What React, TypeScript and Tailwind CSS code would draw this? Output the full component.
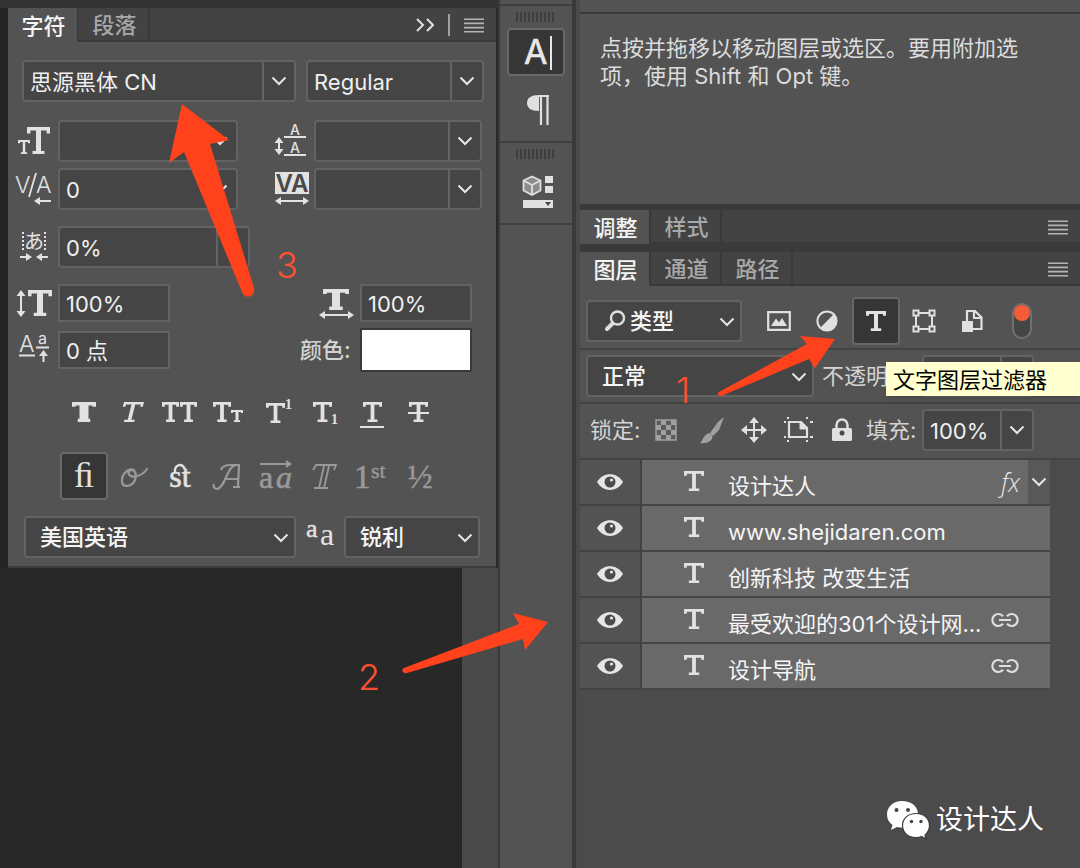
import { useState } from 'react';
import type { ReactNode } from 'react';

const Chevron = ({ className = '' }: { className?: string }) => (
    <svg viewBox="0 0 16 10" className={`w-4 h-[10px] shrink-0 ${className}`} fill="none" stroke="#e6e6e6" strokeWidth="2">
        <path d="M1.5 1.5 8 8l6.5-6.5" />
    </svg>
);

const MenuLines = () => (
    <svg viewBox="0 0 20 15" className="w-5 h-[15px]" stroke="#b4b4b4" strokeWidth="1.6">
        <path d="M0 1.2h20M0 5.4h20M0 9.6h20M0 13.8h20" />
    </svg>
);

// Slab "type" symbol, drawn with strokes so that it can have any weight
const SlabT = ({ x, y, w, h, s = 3, stem = s + 1 }: { x: number; y: number; w: number; h: number; s?: number; stem?: number }) => {
    const c = x + w / 2;
    const drop = Math.max(3, h * 0.24);
    return (
        <g fill="none" stroke="currentColor">
            <path strokeWidth={s} d={`M${x + s / 2} ${y + drop}V${y + s / 2}H${x + w - s / 2}V${y + drop}`} />
            <path strokeWidth={stem} d={`M${c} ${y}V${y + h}`} />
            <path strokeWidth={s * 0.9} d={`M${c - w * 0.26} ${y + h - s * 0.45}H${c + w * 0.26}`} />
        </g>
    );
};

const Glyph = ({ children, box = '0 0 36 34', className = 'w-9 h-[34px]' }: { children: ReactNode; box?: string; className?: string }) => (
    <svg viewBox={box} className={`shrink-0 overflow-visible text-[#e2e2e2] ${className}`} fill="currentColor">
        {children}
    </svg>
);

const ArrowH = ({ x1, x2, y, both = false }: { x1: number; x2: number; y: number; both?: boolean }) => {
    const d = x2 > x1 ? 1 : -1;
    return (
        <g>
            <path d={`M${both ? x1 + 4 : x1} ${y}H${x2 - d * 4}`} stroke="currentColor" strokeWidth="2" />
            <path d={`M${x2} ${y}l${-d * 6} -4v8z`} />
            {both && <path d={`M${x1} ${y}l${d * 6} -4v8z`} />}
        </g>
    );
};

const ArrowV = ({ x, y1, y2 }: { x: number; y1: number; y2: number }) => (
    <g>
        <path d={`M${x} ${y1 + 4}V${y2 - 4}`} stroke="currentColor" strokeWidth="2" />
        <path d={`M${x} ${y1}l-4.5 6h9zM${x} ${y2}l-4.5 -6h9z`} />
    </g>
);

const icons = {
    size: (
        <Glyph>
            <SlabT x={2} y={16} w={12} h={14} s={2} stem={2.5} />
            <SlabT x={11} y={3} w={23} h={27} s={3.4} stem={5} />
        </Glyph>
    ),
    kerning: (
        <Glyph>
            <text x="-1" y="21" className="text-[23px] font-light">V</text>
            <text x="20" y="21" className="text-[23px] font-light">A</text>
            <path d="M13 25 20 1" stroke="currentColor" strokeWidth="1.8" />
            <ArrowH x1={35} x2={18} y={29} />
        </Glyph>
    ),
    leading: (
        <Glyph>
            <text x="23" y="11" textAnchor="middle" className="text-[14px] font-medium">A</text>
            <text x="23" y="29" textAnchor="middle" className="text-[14px] font-medium">A</text>
            <path d="M12 13h22M12 31h22" stroke="currentColor" strokeWidth="2" />
            <ArrowV x={7} y1={13} y2={31} />
        </Glyph>
    ),
    tracking: (
        <Glyph>
            <path d="M3 0h34v22H3z" />
            <text x="20" y="20" textAnchor="middle" fill="#484848" className="text-[24px] font-semibold">VA</text>
            <ArrowH x1={3} x2={37} y={29} both />
        </Glyph>
    ),
    tsume: (
        <Glyph>
            <path d="M7 2v19M29 2v19" stroke="currentColor" strokeWidth="2" strokeDasharray="2 2" />
            <text x="18" y="19" textAnchor="middle" className="text-[20px]">あ</text>
            <ArrowH x1={4} x2={16} y={27} />
            <ArrowH x1={32} x2={20} y={27} />
        </Glyph>
    ),
    scaleY: (
        <Glyph>
            <ArrowV x={5} y1={4} y2={31} />
            <SlabT x={12} y={4} w={24} h={26} s={3.6} stem={6} />
        </Glyph>
    ),
    scaleX: (
        <Glyph>
            <SlabT x={5} y={3} w={26} h={21} s={3.8} stem={8} />
            <ArrowH x1={1} x2={36} y={29} both />
        </Glyph>
    ),
    baseline: (
        <Glyph>
            <text x="3" y="19" className="text-[23px] font-light">A</text>
            <text x="22" y="11" className="text-[16px]">a</text>
            <path d="M3 22.500h16M20 14.500h13" stroke="currentColor" strokeWidth="2" />
            <path d="M27.500 29v-8" stroke="currentColor" strokeWidth="2" />
            <path d="M27.500 17l-4.500 6h9z" />
        </Glyph>
    ),
};

type FieldProps = { id: string; label: string; value?: string; className: string; arrow?: 'split' | 'plain' | 'none' };

// Text box with an optional drop-down arrow at its right end
const Field = ({ id, label, value = '', className, arrow = 'split' }: FieldProps) => (
    <div className={`flex shrink-0 bg-[#454545] border-2 border-[#636363] ${arrow === 'none' ? 'h-[38px]' : 'h-[42px] rounded-[4px]'} ${className}`}>
        <input
            id={id}
            aria-label={label}
            defaultValue={value}
            className="min-w-0 flex-1 bg-transparent pt-[2px] pl-[6px] text-[22px] leading-7 text-[#f0f0f0] outline-none"
        />
        {arrow !== 'none' && (
            <button
                aria-label={`${label} ▾`}
                className={`flex w-8 items-center justify-center ${arrow === 'split' ? 'border-l-2 border-[#636363]' : ''}`}
            >
                <Chevron />
            </button>
        )}
    </div>
);

const Picker = ({ label, options, className, pad = 'pl-[14px]', icon }: { label: string; options: string[]; className: string; pad?: string; icon?: ReactNode }) => (
    <div className={`relative h-[42px] rounded-[4px] border-2 border-[#636363] bg-[#454545] ${className}`}>
        <select aria-label={label} className={`h-full w-full appearance-none bg-transparent pr-8 text-[22px] leading-7 font-medium text-[#f5f5f5] outline-none ${pad}`}>
            {options.map((o) => (
                <option key={o}>{o}</option>
            ))}
        </select>
        {icon}
        <Chevron className="pointer-events-none absolute top-[15px] right-[5px]" />
    </div>
);

const Tabs = ({ names, children }: { names: string[]; children?: ReactNode }) => (
    <div role="tablist" className="flex h-[34px] items-stretch bg-[#434343]">
        {names.map((name, i) => (
            <button
                key={name}
                role="tab"
                aria-selected={i === 0}
                className={`w-[71px] pt-[2px] pl-[2px] text-[22px] leading-7 font-medium border-r-2 border-[#3a3a3a] ${i === 0 ? 'bg-[#535353] text-[#f5f5f5]' : 'border-b-2 text-[#a8a8a8]'
                    }`}
            >
                {name}
            </button>
        ))}
        <div className="flex flex-1 items-center justify-end border-b-2 border-[#3a3a3a] pt-[2px] pr-3">{children}</div>
    </div>
);

const StyleCell = ({ label, children, on = false, dim = false }: { label: string; children: ReactNode; on?: boolean; dim?: boolean }) => (
    <button
        aria-label={label}
        className={`flex w-12 items-center justify-center ${on ? 'h-12 rounded-[4px] border-2 border-[#6a6a6a] bg-[#363636]' : 'h-9'}`}
    >
        <svg viewBox="0 0 40 28" className={`h-7 w-10 shrink-0 overflow-visible ${dim ? 'text-[#999999]' : 'text-[#e2e2e2]'}`} fill="currentColor">
            {children}
        </svg>
    </button>
);

const serif = "font-['Liberation_Serif',serif]";

const CharacterPanel = () => (
    <section className="w-[488px] border-b-2 border-[#3c3c3c] bg-[#535353]">
        <Tabs names={['字符', '段落']}>
            <button aria-label="折叠" className="mr-[14px]">
                <svg viewBox="0 0 18 14" className="h-[14px] w-[18px]" fill="none" stroke="#e0e0e0" strokeWidth="2">
                    <path d="M1 1l6 6-6 6M11 1l6 6-6 6" />
                </svg>
            </button>
            <span className="mr-[14px] h-[22px] w-[2px] bg-[#a0a0a0]" />
            <button aria-label="面板菜单">
                <MenuLines />
            </button>
        </Tabs>

        <div className="flex flex-col pt-[18px] pb-2 pl-2">
            <div className="flex gap-[10px] pl-[6px]">
                <Field id="family" label="字体" value="思源黑体 CN" className="w-[274px]" />
                <Field id="weight" label="字重" value="Regular" className="w-[178px]" />
            </div>

            <div className="mt-[18px] flex items-center gap-[6px]">
                <label htmlFor="size">{icons.size}</label>
                <Field id="size" label="字号" className="w-[180px]" arrow="plain" />
                <label htmlFor="leading" className="ml-7">{icons.leading}</label>
                <Field id="leading" label="行距" className="w-[168px]" />
            </div>
            <div className="mt-[6px] flex items-center gap-[6px]">
                <label htmlFor="kerning">{icons.kerning}</label>
                <Field id="kerning" label="字偶间距" value="0" className="w-[180px]" arrow="plain" />
                <label htmlFor="tracking" className="ml-7">{icons.tracking}</label>
                <Field id="tracking" label="字距" className="w-[168px]" />
            </div>

            <div className="mt-4 flex items-center gap-[6px]">
                <label htmlFor="tsume">{icons.tsume}</label>
                <div className="flex h-[42px] w-[192px] rounded-[4px] border-2 border-[#636363] bg-[#454545]">
                    <input id="tsume" aria-label="比例间距" defaultValue="0%" className="min-w-0 flex-1 bg-transparent pt-[2px] pl-[6px] text-[22px] leading-7 text-[#f0f0f0] outline-none" />
                    <button aria-label="比例间距 ▾" className="w-8 border-l-2 border-[#636363]" />
                </div>
            </div>

            <div className="mt-4 flex items-center gap-[6px]">
                <label htmlFor="scaleY">{icons.scaleY}</label>
                <Field id="scaleY" label="垂直缩放" value="100%" className="w-28" arrow="none" />
                <label htmlFor="scaleX" className="ml-[142px]">{icons.scaleX}</label>
                <Field id="scaleX" label="水平缩放" value="100%" className="w-28" arrow="none" />
            </div>
            <div className="mt-[6px] flex items-center gap-[6px]">
                <label htmlFor="baseline">{icons.baseline}</label>
                <Field id="baseline" label="基线偏移" value="0 点" className="w-28" arrow="none" />
                <label htmlFor="color" className="ml-[124px] w-[54px] text-[22px] leading-7 font-medium text-[#d4d4d4]">颜色:</label>
                <button id="color" aria-label="颜色" className="h-11 w-28 border-2 border-[#3a3a3a] bg-white" />
            </div>

            <div className="mt-[22px] flex pl-11">
                <StyleCell label="仿粗体"><SlabT x={8} y={4} w={24} h={20} s={3.6} stem={9} /></StyleCell>
                <StyleCell label="仿斜体">
                    <g transform="skewX(-14) translate(4 0)"><SlabT x={9} y={4} w={20} h={20} s={2.6} /></g>
                </StyleCell>
                <StyleCell label="全部大写">
                    <SlabT x={2} y={4} w={17} h={20} s={2.8} />
                    <SlabT x={20} y={4} w={17} h={20} s={2.8} />
                </StyleCell>
                <StyleCell label="小型大写">
                    <SlabT x={5} y={4} w={18} h={20} s={2.8} />
                    <SlabT x={23} y={12} w={12} h={12} s={2} />
                </StyleCell>
                <StyleCell label="上标">
                    <SlabT x={10} y={5} w={19} h={20} s={2.8} />
                    <text x="29" y="11" className={`${serif} text-[14px] font-bold`}>1</text>
                </StyleCell>
                <StyleCell label="下标">
                    <SlabT x={9} y={4} w={19} h={20} s={2.8} />
                    <text x="27" y="26" className={`${serif} text-[14px] font-bold`}>1</text>
                </StyleCell>
                <StyleCell label="下划线">
                    <SlabT x={11} y={4} w={19} h={20} s={2.8} />
                    <path d="M8 28h24v2H8z" />
                </StyleCell>
                <StyleCell label="删除线">
                    <SlabT x={9} y={4} w={19} h={20} s={2.8} />
                    <path d="M8 14h21v2H8z" />
                </StyleCell>
            </div>

            <div className="mt-[22px] flex items-center pl-11">
                <StyleCell label="标准连字" on>
                    <text x="20" y="25" textAnchor="middle" className={`${serif} text-[36px]`}>ﬁ</text>
                </StyleCell>
                <StyleCell label="上下文替代字" dim>
                    <path
                        d="M22 8C16 5 9 13 10 20c1 6 10 5 13-2 2-6 0-12-6-9-2 4 3 7 8 5 5-1 8-4 10-7"
                        fill="none"
                        stroke="currentColor"
                        strokeWidth="2.2"
                        strokeLinecap="round"
                    />
                </StyleCell>
                <StyleCell label="自由连字">
                    <text x="20" y="25" textAnchor="middle" stroke="currentColor" strokeWidth="0.6" className={`${serif} text-[32px]`}>st</text>
                    <path d="M15 11C14 2 23 0 25 8" fill="none" stroke="currentColor" strokeWidth="2.4" />
                </StyleCell>
                <StyleCell label="花饰字" dim>
                    <path
                        d="M13 8c1-4 6-5 10-5h9M31 3l-1 21M28 3C18 5 18 25 9 27c-3 0-4-3-3-5M16 17h14M25 25h7"
                        fill="none"
                        stroke="currentColor"
                        strokeWidth="2.2"
                    />
                </StyleCell>
                <StyleCell label="文体替代字" dim>
                    <text x="3" y="26" stroke="currentColor" strokeWidth="0.6" className={`${serif} text-[32px]`}>a</text>
                    <text x="20" y="26" stroke="currentColor" strokeWidth="0.6" className={`${serif} text-[32px] italic`}>a</text>
                    <ArrowH x1={4} x2={36} y={2} />
                </StyleCell>
                <StyleCell label="标题替代字" dim>
                    <path d="M9 8l3-5h20l-2 5M20 4l-5 22M25 4l-5 22M10 26h14" fill="none" stroke="currentColor" strokeWidth="1.8" />
                </StyleCell>
                <StyleCell label="序数字" dim>
                    <text x="2" y="26" stroke="currentColor" strokeWidth="0.6" className={`${serif} text-[33px]`}>1</text>
                    <text x="19" y="16" stroke="currentColor" strokeWidth="0.4" className={`${serif} text-[22px]`}>st</text>
                </StyleCell>
                <StyleCell label="分数字" dim>
                    <text x="20" y="26" textAnchor="middle" stroke="currentColor" strokeWidth="0.4" className={`${serif} text-[33px]`}>½</text>
                </StyleCell>
            </div>

            <div className="mt-4 flex items-center pl-2">
                <Picker label="语言" options={['美国英语']} className="w-[272px]" />
                <Glyph className="mx-[6px] h-[34px] w-9">
                    <text x="4" y="17" stroke="currentColor" strokeWidth="0.4" className={`${serif} text-[26px]`}>a</text>
                    <text x="18" y="25" className={`${serif} text-[32px]`}>a</text>
                </Glyph>
                <Picker label="消除锯齿" options={['锐利']} className="w-[136px]" />
            </div>
        </div>
    </section>
);

const Gripper = () => (
    <svg viewBox="0 0 40 10" className="h-[10px] w-10" stroke="#3e3e3e" strokeWidth="2">
        <path d="M1 0v10M5 0v10M9 0v10M13 0v10M17 0v10M21 0v10M25 0v10M29 0v10M33 0v10M37 0v10" />
    </svg>
);

const Dock = () => (
    <aside className="flex w-[78px] shrink-0 flex-col border-x-2 border-r-[4px] border-[#3a3a3a] bg-[#535353] pt-1">
        <div className="flex h-[139px] flex-col items-center border-y-2 border-[#3e3e3e] pt-[6px]">
            <Gripper />
            <button aria-label="字符" className="mt-[6px] h-12 w-[58px] rounded-[4px] border-2 border-[#686868] bg-[#363636]">
                <svg viewBox="0 0 54 44" className="h-11 w-[54px] text-[#e8e8e8]" fill="currentColor">
                    <text x="15" y="34" stroke="currentColor" strokeWidth="0.6" className="text-[34px]">A</text>
                    <path d="M41 6h2v34h-2z" />
                </svg>
            </button>
            <button aria-label="段落" className="mt-[18px]">
                <svg viewBox="0 0 24 32" className="ml-1 h-8 w-6 text-[#e0e0e0]">
                    <path d="M13 1C5 1 1 4 1 9s4 8 12 8z" fill="currentColor" />
                    <path d="M13 2h10M15 1v30M21.500 1v30" stroke="currentColor" strokeWidth="2.200" fill="none" />
                </svg>
            </button>
        </div>
        <div className="flex h-[82px] flex-col items-center border-b-2 border-[#3e3e3e] pt-[6px]">
            <Gripper />
            <button aria-label="属性" className="mt-4">
                <svg viewBox="0 0 32 34" className="ml-1 h-[34px] w-8" stroke="#e0e0e0">
                    <path d="M10 1.500l8.500 4v10L10 20l-8.500-4.500v-10z" fill="#8c8c8c" strokeWidth="1.800" />
                    <path d="M1.500 5.500L10 10l8.500-4.500M10 10v10" fill="none" strokeWidth="1.800" />
                    <path d="M23 1h8v7h-8zM23 11h8v7h-8zM1 25h30v8H1z" fill="#e0e0e0" stroke="none" />
                    <path d="M23 27h6l-3 4z" fill="#444" stroke="none" />
                </svg>
            </button>
        </div>
    </aside>
);

const layers = [
    { name: '设计达人', tail: 'fx' },
    { name: 'www.shejidaren.com' },
    { name: '创新科技 改变生活' },
    { name: '最受欢迎的301个设计网...', tail: 'link' },
    { name: '设计导航', tail: 'link' },
];

const Eye = () => (
    <svg viewBox="0 0 26 16" className="h-4 w-[26px]">
        <path d="M0 8C6-2.500 20-2.500 26 8 20 18.500 6 18.500 0 8z" fill="#e6e6e6" />
        <circle cx="13" cy="8" r="5.500" fill="#4c4c4c" />
        <circle cx="14.500" cy="6" r="1.600" fill="#e6e6e6" />
    </svg>
);

const LinkIcon = () => (
    <svg viewBox="0 0 30 16" className="h-4 w-[30px]" fill="none" stroke="#dedede" strokeWidth="2.2">
        <path d="M13 4.200A6 6 0 1 0 13 11.800M17 4.200A6 6 0 1 1 17 11.800M9 8h12" />
    </svg>
);

const LayersPanel = () => {
    const [hidden, setHidden] = useState<string[]>([]);
    const toggle = (name: string) =>
        setHidden(hidden.includes(name) ? hidden.filter((n) => n !== name) : [...hidden, name]);

    return (
        <section className="flex flex-1 flex-col bg-[#4c4b4c]">
            <Tabs names={['图层', '通道', '路径']}>
                <button aria-label="面板菜单"><MenuLines /></button>
            </Tabs>

            <div className="bg-[#535353]">
                <div className="flex h-16 items-center border-b-2 border-[#424242] pt-2 pl-[6px]">
                    <Picker
                        label="过滤类型"
                        options={['类型']}
                        className="w-[156px]"
                        pad="pl-[42px]"
                        icon={
                            <svg viewBox="0 0 22 22" className="pointer-events-none absolute top-2 left-4 h-[22px] w-[22px]" fill="none" stroke="#dedede">
                                <circle cx="13.500" cy="8" r="6.500" strokeWidth="2.400" />
                                <path d="M8.500 13.500L3 19" strokeWidth="4" strokeLinecap="round" />
                            </svg>
                        }
                    />
                    <button aria-label="像素图层过滤器" className="ml-[25px]">
                        <svg viewBox="0 0 24 20" className="h-5 w-6 text-[#e0e0e0]">
                            <path d="M1.200 1.200h21.600v17.600H1.200z" fill="none" stroke="currentColor" strokeWidth="2.200" />
                            <path d="M4 15l5-7.500 3 4 3-4.500 5 8z" fill="currentColor" />
                        </svg>
                    </button>
                    <button aria-label="调整图层过滤器" className="ml-[25px]">
                        <svg viewBox="0 0 22 22" className="h-[22px] w-[22px]">
                            <circle cx="11" cy="11" r="9.600" fill="none" stroke="#e0e0e0" strokeWidth="2" />
                            <path d="M18.200 3.800A10.200 10.200 0 0 1 3.800 18.200z" fill="#e0e0e0" />
                        </svg>
                    </button>
                    <button aria-label="文字图层过滤器" className="ml-[14px] flex h-12 w-12 items-center justify-center rounded-[4px] border-2 border-[#666] bg-[#363636]">
                        <Glyph box="0 0 20 22" className="h-[22px] w-5"><SlabT x={0} y={1} w={20} h={20} s={3} /></Glyph>
                    </button>
                    <button aria-label="形状图层过滤器" className="ml-3">
                        <svg viewBox="0 0 24 24" className="h-6 w-6" fill="none" stroke="#e0e0e0" strokeWidth="2">
                            <path d="M6 4h12M6 20h12M4 6v12M20 6v12" />
                            <path d="M1.500 1.500h5v5h-5zM17.500 1.500h5v5h-5zM1.500 17.500h5v5h-5zM17.500 17.500h5v5h-5z" />
                        </svg>
                    </button>
                    <button aria-label="智能对象过滤器" className="ml-[25px]">
                        <svg viewBox="0 0 22 24" className="h-6 w-[22px]" fill="none" stroke="#e0e0e0" strokeWidth="2.200">
                            <path d="M6 12V2h8l6.500 6.500V20H12M13 2v7h7" />
                            <path d="M1 12h11v11H1z" fill="#e0e0e0" stroke="none" />
                        </svg>
                    </button>
                    <button role="switch" aria-checked="true" aria-label="图层过滤" className="ml-[29px] h-9 w-5 rounded-full border-2 border-[#707070] bg-[#454545]">
                        <span className="mx-auto -mt-4 block h-4 w-4 rounded-full bg-[#f55b37]" />
                    </button>
                </div>

                <div className="flex h-[54px] items-center border-b-2 border-[#424242] pl-[6px]">
                    <Picker label="混合模式" options={['正常']} className="w-[228px]" />
                    <label htmlFor="opacity" className="ml-2 w-[100px] text-[22px] leading-7 text-[#d4d4d4]">不透明</label>
                    <Field id="opacity" label="不透明度" className="w-28" />
                </div>

                <div className="flex h-14 items-center border-b-2 border-[#424242] pb-[2px] pl-[10px] text-[22px] leading-7 text-[#d4d4d4]">
                    <span className="w-[52px]">锁定:</span>
                    <button aria-label="锁定透明像素" className="ml-[13px]">
                        <svg viewBox="0 0 22 22" className="h-[22px] w-[22px]">
                            <path d="M1 1h20v20H1z" fill="#5c5c5c" stroke="#a0a0a0" strokeWidth="1.500" />
                            <path d="M6 1h5v5H6zM16 1h5v5h-5zM1 6h5v5H1zM11 6h5v5h-5zM6 11h5v5H6zM16 11h5v5h-5zM1 16h5v5H1zM11 16h5v5h-5z" fill="#a0a0a0" />
                        </svg>
                    </button>
                    <button aria-label="锁定图像像素" className="ml-[22px]">
                        <svg viewBox="0 0 26 28" className="h-7 w-[26px]" fill="#a0a0a0">
                            <path d="M25 1l-5 13-6 6-3-3L19 6z" />
                            <path d="M10 17c3 1 4 3 3 6-3 4-8 5-12 4 3-2 3-8 9-10z" />
                        </svg>
                    </button>
                    <button aria-label="锁定位置" className="ml-4">
                        <svg viewBox="0 0 26 26" className="h-[26px] w-[26px]" fill="#e0e0e0">
                            <path d="M13 3v20M3 13h20" stroke="#e0e0e0" strokeWidth="2" />
                            <path d="M13 0l5 6H8zM13 26l5-6H8zM0 13l6-5v10zM26 13l-6-5v10z" />
                        </svg>
                    </button>
                    <button aria-label="防止嵌套" className="ml-4">
                        <svg viewBox="0 0 30 26" className="h-[26px] w-[30px]" fill="none" stroke="#e0e0e0">
                            <path d="M6 5h12l6 6v9H6z" strokeWidth="2.200" />
                            <path d="M17 5v7h7z" fill="#e0e0e0" />
                            <path d="M5 0v2M24 0v2M5 23v2M24 23v2M1 5h2M27 5h3M1 20h2M27 20h3" strokeWidth="2" />
                        </svg>
                    </button>
                    <button aria-label="锁定全部" className="ml-[18px]">
                        <svg viewBox="0 0 22 24" className="h-6 w-[22px]">
                            <path d="M5.500 11V7a5.500 5.500 0 0 1 11 0v4" fill="none" stroke="#e0e0e0" strokeWidth="2.400" />
                            <rect x="1" y="10" width="20" height="13" rx="1.500" fill="#e0e0e0" />
                            <circle cx="11" cy="15" r="2.500" fill="#484848" />
                        </svg>
                    </button>
                    <label htmlFor="fill" className="ml-[13px] w-14">填充:</label>
                    <Field id="fill" label="填充" value="100%" className="w-28" />
                </div>
            </div>

            <ul className="mr-[30px]">
                {layers.map((layer) => (
                    <li key={layer.name} className="flex h-[46px]">
                        <button
                            aria-label={`显示 ${layer.name}`}
                            onClick={() => toggle(layer.name)}
                            className="flex w-[62px] items-center justify-center border-r-2 border-b-2 border-[#424242] bg-[#535353]"
                        >
                            {!hidden.includes(layer.name) && <Eye />}
                        </button>
                        <div className="flex min-w-0 flex-1 items-center border-b-2 border-[#454545] bg-[#6a696a]">
                            <Glyph box="0 0 20 22" className="mr-6 ml-[42px] h-[22px] w-5"><SlabT x={0} y={0} w={20} h={20} s={2.8} /></Glyph>
                            <span className="pt-2 text-[22px] leading-7 whitespace-nowrap text-[#f5f5f5]">{layer.name}</span>
                            {layer.tail === 'fx' && (
                                <div className="ml-auto flex h-full items-center">
                                    <span className="mr-2 font-['Open_Sans',sans-serif] text-[25px] leading-7 font-light text-[#e6e6e6] italic">fx</span>
                                    <button aria-label="展开效果" className="flex h-full w-[22px] items-center justify-center bg-[#595859]">
                                        <Chevron />
                                    </button>
                                </div>
                            )}
                            {layer.tail === 'link' && (
                                <span className="mr-[30px] ml-auto"><LinkIcon /></span>
                            )}
                        </div>
                    </li>
                ))}
            </ul>
        </section>
    );
};

const Watermark = () => (
    <div className="absolute right-9 bottom-7 flex items-center gap-[6px]">
        <svg viewBox="0 0 44 40" className="h-10 w-11">
            <path d="M16 1C7 1 1 7 1 14.500c0 4.500 2 8 5.500 10.500L5 30l6-3c13 3 21-4 21-12.500S25 1 16 1z" fill="#fff" />
            <path d="M30 13.500c-8 0-13.500 5-13.500 12S22 37.500 30 37.500c2 0 4-.3 5.500-1l4.500 2.500-1-4c3-2.500 4.500-6 4.500-9.500 0-7-5.500-12-13.500-12z" fill="#fff" stroke="#3a3a3a" strokeWidth="1.200" />
            <g fill="#444">
                <circle cx="10.500" cy="10" r="2" />
                <circle cx="22" cy="10" r="2" />
                <circle cx="25.500" cy="21.500" r="1.700" />
                <circle cx="35" cy="21.500" r="1.700" />
            </g>
        </svg>
        <span className="text-[27px] leading-9 text-white">设计达人</span>
    </div>
);

// Numbered arrows laid over the panels
const Notes = () => (
    <div className="pointer-events-none">
        <svg viewBox="0 0 90 196" className="absolute top-[103px] left-[167px] h-[196px] w-[90px]" fill="#ff421c">
            <path d="M15 1L62 37 43 41 87 185C89 193 79 198 75 189L17 49 2 60z" />
        </svg>
        <svg viewBox="0 0 120 64" className="absolute top-[335px] left-[717px] h-16 w-[120px]" fill="#ff421c">
            <path d="M118 4L98 33 92 24 4 61C1 62 0 58 2 57L90 9 83 1z" />
        </svg>
        <svg viewBox="0 0 148 66" className="absolute top-[612px] left-[401px] h-[66px] w-[148px]" fill="#ff421c">
            <path d="M147 10L124 38 122 27 6 61C1 62 0 57 3 56L118 12 112 1z" />
        </svg>
        <span className="absolute top-[370px] left-[676px] text-[36px] leading-10 font-light text-[#ff5030]">1</span>
        <span className="absolute top-[657px] left-[358px] text-[36px] leading-10 font-light text-[#ff5030]">2</span>
        <span className="absolute top-[245px] left-[276px] text-[36px] leading-10 font-light text-[#ff5030]">3</span>
    </div>
);

const App = () => {
    return (
        <div className="relative flex min-h-screen overflow-hidden bg-[#282828] font-['Inter','Noto_Sans_CJK_SC',sans-serif]">
            <main className="flex w-[498px] shrink-0 flex-col">
                <div className="h-2 bg-[#333333]" />
                <div className="border-l-8 border-[#242424]">
                    <CharacterPanel />
                </div>
                <div className="flex flex-1 justify-end">
                    <div className="w-9 bg-[#4a494a]" />
                </div>
            </main>

            <Dock />

            <div className="flex min-w-0 flex-1 flex-col border-l-4 border-[#4a4a4a] bg-[#3a3a3a]">
                <div className="h-3 bg-[#535353]" />
                <p className="mt-[2px] h-[190px] bg-[#535353] pt-5 pr-8 pl-5 text-[22px] leading-7 text-[#dcdcdc]">
                    点按并拖移以移动图层或选区。要用附加选
                    <br />
                    项，使用 Shift 和 Opt 键。
                </p>
                <div className="mt-[6px] mb-2">
                    <Tabs names={['调整', '样式']}>
                        <button aria-label="面板菜单"><MenuLines /></button>
                    </Tabs>
                </div>
                <LayersPanel />
            </div>

            <div role="tooltip" className="absolute top-[362px] right-0 w-[194px] bg-[#ffffcf] pt-1 pb-[2px] pl-[7px] text-[22px] leading-7 text-black shadow-md">
                文字图层过滤器
            </div>
            <Notes />
            <Watermark />
        </div>
    );
};

export default App;
